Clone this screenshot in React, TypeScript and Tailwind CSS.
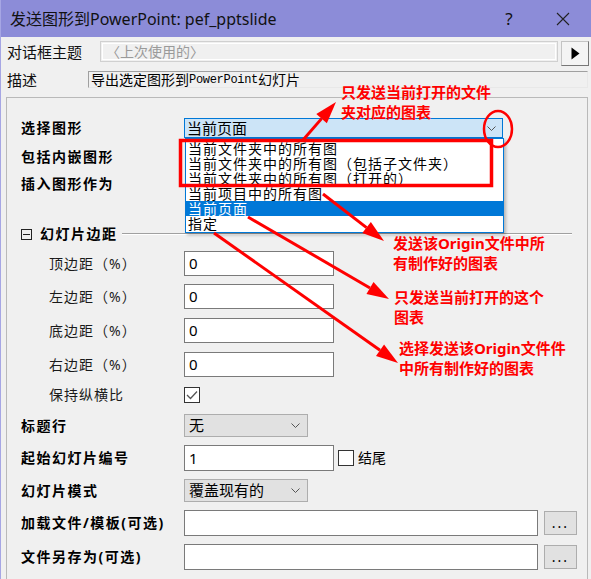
import React from "react";

const arrows = [
  { x1: 302, y1: 140, x2: 335, y2: 102 },
  { x1: 322, y1: 194, x2: 383, y2: 241 },
  { x1: 247, y1: 217, x2: 388, y2: 299 },
  { x1: 213, y1: 233, x2: 397, y2: 363 },
];

const listItems = [
  "当前文件夹中的所有图",
  "当前文件夹中的所有图（包括子文件夹）",
  "当前文件夹中的所有图（打开的）",
  "当前项目中的所有图",
  "当前页面",
  "指定",
];

const notes = [
  { left: "left-[340px]", top: "top-[82px]", lines: ["只发送当前打开的文件", "夹对应的图表"] },
  { left: "left-[392px]", top: "top-[233px]", lines: ["发送该Origin文件中所", "有制作好的图表"] },
  { left: "left-[393px]", top: "top-[287px]", lines: ["只发送当前打开的这个", "图表"] },
  { left: "left-[398px]", top: "top-[338px]", lines: ["选择发送该Origin文件件", "中所有制作好的图表"] },
];

function head(x1: number, y1: number, x2: number, y2: number) {
  const a = Math.atan2(y2 - y1, x2 - x1);
  const len = 22;
  const w = 7;
  const bx = x2 - len * Math.cos(a);
  const by = y2 - len * Math.sin(a);
  const px = w * Math.sin(a);
  const py = -w * Math.cos(a);
  return { bx, by, pts: `${x2},${y2} ${bx + px},${by + py} ${bx - px},${by - py}` };
}

function Chevron() {
  return (
    <svg width="9" height="5" viewBox="0 0 9 5" className="shrink-0">
      <path d="M0.5 0.5 L4.5 4.5 L8.5 0.5" fill="none" stroke="#555" strokeWidth="1" />
    </svg>
  );
}

function Check({ checked }: { checked?: boolean }) {
  return (
    <div className="w-[16px] h-[16px] border border-[#333] bg-white flex items-center justify-center shrink-0">
      {checked && (
        <svg width="12" height="10" viewBox="0 0 12 10">
          <path d="M1 5 L4.5 8.5 L11 1.5" fill="none" stroke="#555" strokeWidth="1.3" />
        </svg>
      )}
    </div>
  );
}

function Label({ children, bold }: { children: React.ReactNode; bold?: boolean }) {
  return bold ? (
    <span className="w-[163px] shrink-0 text-[14px] font-bold tracking-[1.5px] text-black">{children}</span>
  ) : (
    <span className="w-[135px] ml-[28px] shrink-0 text-[14px] tracking-[1px] text-[#1a1a1a]">{children}</span>
  );
}

function Field({ w, value }: { w: string; value?: string }) {
  return (
    <div className={`${w} h-full border border-[#7a7a7a] bg-white pl-[4px] flex items-center text-[15px] text-black`}>{value}</div>
  );
}

function Combo({ value }: { value: string }) {
  return (
    <div className="w-[124px] h-full border border-[#adadad] bg-[#e1e1e1] pl-[4px] pr-[7px] flex items-center justify-between text-[15px] text-black">
      <span>{value}</span>
      <Chevron />
    </div>
  );
}

export default function App() {
  return (
    <div className="relative w-[591px] h-[579px] overflow-hidden bg-[#f0f0f0] border-l border-[#a6a6e4] font-['Noto_Sans','Noto_Sans_CJK_SC',sans-serif] leading-none">
      {/* title bar */}
      <div className="h-[37px] bg-[#8c8cd8] flex items-center pl-[9px] text-[16px] text-[#111]">
        <span className="flex-1">发送图形到PowerPoint: pef_pptslide</span>
        <span className="w-[20px] text-center text-[17px] mr-[37px]">?</span>
        <svg width="14" height="14" viewBox="0 0 14 14" className="mr-[21px]">
          <path d="M1 1 L13 13 M13 1 L1 13" stroke="#222" strokeWidth="1.1" />
        </svg>
      </div>

      {/* theme row */}
      <div className="mt-[4px] h-[25px] flex pr-[2px]">
        <span className="w-[99px] pl-[6px] pt-[1px] text-[15px] text-[#111] leading-[20px]">对话框主题</span>
        <div className="flex-1 h-[21px] border border-[#d0d0d0] p-px">
          <div className="w-full h-full border border-white bg-[#f0f0f0] flex items-center pl-[3px] text-[14px] text-[#9a9a9a]">〈上次使用的〉</div>
        </div>
        <div className="ml-[3px] w-[28px] h-[25px] border border-[#c4c4c4] border-r-[#777] border-b-[#777] bg-[#f4f4f4] flex items-center justify-center">
          <svg width="9" height="13" viewBox="0 0 9 13">
            <path d="M0.5 0.5 L8.5 6.5 L0.5 12.5 Z" fill="#000" />
          </svg>
        </div>
      </div>

      {/* description row */}
      <div className="mt-[5px] h-[17px] flex pr-[3px]">
        <span className="w-[87px] pl-[6px] text-[15px] text-[#111] leading-[18px]">描述</span>
        <div className="flex-1 h-full border border-[#a0a0a0] border-r-[#e8e8e8] border-b-[#e8e8e8] flex items-center pl-[2px] text-[14px] text-black">
          导出选定图形到<span className="font-['Liberation_Mono',monospace] text-[12px] tracking-[-0.3px]">PowerPoint</span>幻灯片
        </div>
      </div>

      {/* panel */}
      <div className="mt-[9px] ml-[5px] mr-[3px] border border-[#b9b9b9] pl-[14px] pt-[20px] pb-[20px] flex flex-col">
        <div className="h-[20px] flex items-center">
          <Label bold>选择图形</Label>
          <div className="w-[319px] h-full border border-[#0078d7] bg-[#cce4f7] pl-[2px] pr-[6px] flex items-center justify-between text-[15px] text-black">
            <span>当前页面</span>
            <Chevron />
          </div>
        </div>
        <div className="mt-[9px] h-[20px] flex items-center">
          <Label bold>包括内嵌图形</Label>
        </div>
        <div className="mt-[7px] h-[20px] flex items-center">
          <Label bold>插入图形作为</Label>
        </div>

        <div className="mt-[30px] h-[20px] flex items-center pr-[15px]">
          <div className="w-[11px] h-[11px] border border-[#222] flex items-center justify-center">
            <div className="w-[7px] h-px bg-[#222]" />
          </div>
          <span className="ml-[8px] text-[14px] font-bold tracking-[1.5px] text-black">幻灯片边距</span>
          <div className="flex-1 ml-[4px] h-[2px] border-t border-[#a0a0a0] border-b border-b-white" />
        </div>

        <div className="mt-[7px] h-[25px] flex items-center">
          <Label>顶边距（%）</Label>
          <Field w="w-[150px]" value="0" />
        </div>
        <div className="mt-[8px] h-[25px] flex items-center">
          <Label>左边距（%）</Label>
          <Field w="w-[150px]" value="0" />
        </div>
        <div className="mt-[9px] h-[25px] flex items-center">
          <Label>底边距（%）</Label>
          <Field w="w-[150px]" value="0" />
        </div>
        <div className="mt-[9px] h-[25px] flex items-center">
          <Label>右边距（%）</Label>
          <Field w="w-[150px]" value="0" />
        </div>
        <div className="mt-[9px] h-[17px] flex items-center">
          <Label>保持纵横比</Label>
          <Check checked />
        </div>

        <div className="mt-[11px] h-[23px] flex items-center">
          <Label bold>标题行</Label>
          <Combo value="无" />
        </div>
        <div className="mt-[8px] h-[26px] flex items-center">
          <Label bold>起始幻灯片编号</Label>
          <Field w="w-[150px]" value="1" />
          <div className="ml-[4px]">
            <Check />
          </div>
          <span className="ml-[4px] text-[14px] text-black">结尾</span>
        </div>
        <div className="mt-[8px] h-[23px] flex items-center">
          <Label bold>幻灯片模式</Label>
          <Combo value="覆盖现有的" />
        </div>
        <div className="mt-[8px] h-[26px] flex items-center">
          <Label bold>加载文件/模板(可选)</Label>
          <Field w="w-[354px]" />
          <div className="ml-[6px] w-[33px] h-[24px] border border-[#adadad] bg-[#e1e1e1] flex items-center justify-center text-[14px] tracking-[2px] text-black">...</div>
        </div>
        <div className="mt-[8px] h-[26px] flex items-center">
          <Label bold>文件另存为(可选)</Label>
          <Field w="w-[354px]" />
          <div className="ml-[6px] w-[33px] h-[24px] border border-[#adadad] bg-[#e1e1e1] flex items-center justify-center text-[14px] tracking-[2px] text-black">...</div>
        </div>
      </div>

      {/* open dropdown list */}
      <div className="absolute left-[184px] top-[138px] w-[319px] border border-[#0078d7] bg-white pt-[2px] pb-px shadow-[2px_2px_3px_rgba(0,0,0,0.25)]">
        {listItems.map((t, i) => (
          <div
            key={t}
            className={`h-[15px] pl-[2px] text-[14px] tracking-[1px] leading-[15px] whitespace-nowrap ${i === 4 ? "bg-[#0078d7] text-white" : "text-black"}`}
          >
            {t}
          </div>
        ))}
      </div>

      {/* annotation overlay */}
      <svg className="absolute inset-0 pointer-events-none" width="591" height="579">
        <rect x="179.5" y="140.5" width="311" height="45" fill="none" stroke="#ff0000" strokeWidth="3.5" />
        <ellipse cx="497" cy="129" rx="14" ry="18" fill="none" stroke="#ff0000" strokeWidth="2.5" />
        {arrows.map((a, i) => {
          const h = head(a.x1, a.y1, a.x2, a.y2);
          return (
            <g key={i}>
              <line x1={a.x1} y1={a.y1} x2={h.bx} y2={h.by} stroke="#ff0000" strokeWidth="3" />
              <polygon points={h.pts} fill="#ff0000" />
            </g>
          );
        })}
      </svg>

      {notes.map((n) => (
        <div key={n.lines[0]} className={`absolute ${n.left} ${n.top} text-[15px] leading-[20px] font-bold text-[#ff0000] whitespace-nowrap`}>
          {n.lines.map((l) => (
            <div key={l}>{l}</div>
          ))}
        </div>
      ))}
    </div>
  );
}
